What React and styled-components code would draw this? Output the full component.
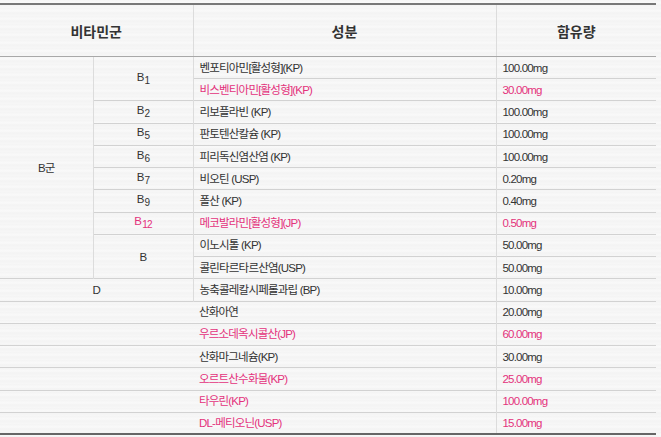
import React from "react";
import styled, { createGlobalStyle } from "styled-components";

const GlobalStyle = createGlobalStyle`
  html, body {
    margin: 0;
    padding: 0;
    background: #f6f6f6;
  }
  body {
    font-family: "Liberation Sans", "Noto Sans CJK KR", sans-serif;
    color: #333;
  }
`;

const Page = styled.div`
  width: 661px;
  height: 437px;
  padding-top: 3px;
  box-sizing: border-box;
  background: repeating-linear-gradient(
    180deg,
    #f4f4f4 0px,
    #f9f9f9 3px,
    #f3f3f3 5px,
    #f7f7f7 8px
  );
`;

const Table = styled.table`
  width: 656px;
  border-collapse: collapse;
  table-layout: fixed;
  border-top: 2px solid #777;
  border-bottom: 2px solid #666;
`;

const HeadCell = styled.th`
  height: 51px;
  padding: 0;
  font-family: "Noto Sans CJK KR", sans-serif;
  font-size: 14px;
  font-weight: 700;
  color: #333;
  text-align: center;
  border-bottom: 1px solid #a8a8a8;
  border-left: ${(p) => (p.$first ? "none" : "1px solid #dcdcdc")};
`;

const Row = styled.tr`
  height: 22.24px;
`;

const Cell = styled.td`
  padding: 0 0 0 ${(p) => (p.$center ? 0 : 6)}px;
  font-size: 11.5px;
  letter-spacing: -0.8px;
  line-height: 14px;
  white-space: nowrap;
  text-align: ${(p) => (p.$center ? "center" : "left")};
  color: ${(p) => (p.$pink ? "#e4327c" : "#333")};
  border-top: 1px solid #d2d2d2;
  border-left: ${(p) =>
    p.$first ? "none" : p.$open ? "hidden" : "1px solid #dcdcdc"};
`;

const Sub = styled.sub`
  font-size: 10px;
  vertical-align: -3px;
  margin-left: 1px;
`;

const Vit = ({ name, sub }) => (
  <>
    {name}
    {sub && <Sub>{sub}</Sub>}
  </>
);

// B group rows; span marks the vitamin cell that starts on that row
const bRows = [
  { v: "1", span: 2, name: "벤포티아민[활성형](KP)", amt: "100.00mg" },
  { name: "비스벤티아민[활성형](KP)", amt: "30.00mg", pink: true },
  { v: "2", span: 1, name: "리보플라빈 (KP)", amt: "100.00mg" },
  { v: "5", span: 1, name: "판토텐산칼슘 (KP)", amt: "100.00mg" },
  { v: "6", span: 1, name: "피리독신염산염 (KP)", amt: "100.00mg" },
  { v: "7", span: 1, name: "비오틴 (USP)", amt: "0.20mg" },
  { v: "9", span: 1, name: "폴산 (KP)", amt: "0.40mg" },
  { v: "12", span: 1, name: "메코발라민[활성형](JP)", amt: "0.50mg", pink: true },
  { v: "", span: 2, name: "이노시톨 (KP)", amt: "50.00mg" },
  { name: "콜린타르타르산염(USP)", amt: "50.00mg" },
];

const etcRows = [
  { name: "산화아연", amt: "20.00mg" },
  { name: "우르소데옥시콜산(JP)", amt: "60.00mg", pink: true },
  { name: "산화마그네슘(KP)", amt: "30.00mg" },
  { name: "오르트산수화물(KP)", amt: "25.00mg", pink: true },
  { name: "타우린(KP)", amt: "100.00mg", pink: true },
  { name: "DL-메티오닌(USP)", amt: "15.00mg", pink: true },
];

export default function App() {
  return (
    <Page>
      <GlobalStyle />
      <Table>
        <colgroup>
          <col style={{ width: 93 }} />
          <col style={{ width: 100 }} />
          <col style={{ width: 303 }} />
          <col style={{ width: 160 }} />
        </colgroup>
        <thead>
          <tr>
            <HeadCell $first colSpan={2}>
              비타민군
            </HeadCell>
            <HeadCell>성분</HeadCell>
            <HeadCell>함유량</HeadCell>
          </tr>
        </thead>
        <tbody>
          {bRows.map((r, i) => (
            <Row key={r.name}>
              {i === 0 && (
                <Cell $first $center rowSpan={bRows.length}>
                  B군
                </Cell>
              )}
              {r.span && (
                <Cell $center rowSpan={r.span} $pink={r.pink}>
                  <Vit name="B" sub={r.v} />
                </Cell>
              )}
              <Cell $pink={r.pink}>{r.name}</Cell>
              <Cell $pink={r.pink}>{r.amt}</Cell>
            </Row>
          ))}
          <Row>
            <Cell $first $center colSpan={2}>
              D
            </Cell>
            <Cell>농축콜레칼시페롤과립 (BP)</Cell>
            <Cell>10.00mg</Cell>
          </Row>
          {etcRows.map((r) => (
            <Row key={r.name}>
              <Cell $first colSpan={2} />
              <Cell $open $pink={r.pink}>
                {r.name}
              </Cell>
              <Cell $pink={r.pink}>{r.amt}</Cell>
            </Row>
          ))}
        </tbody>
      </Table>
    </Page>
  );
}
